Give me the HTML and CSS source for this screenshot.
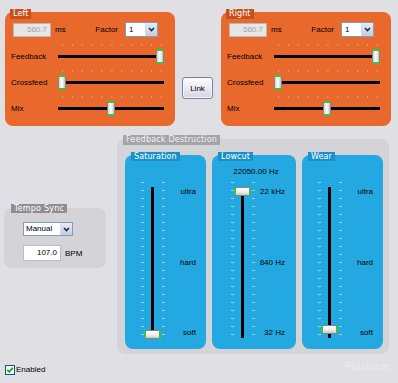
FILE: index.html
```html
<!DOCTYPE html>
<html>
<head>
<meta charset="utf-8">
<title>Delay</title>
<link rel="stylesheet" href="styles.css">
</head>
<body>
<div class="app">
  <div class="top-row">
    <section class="panel">
      <div class="title orange-title">Left</div>
      <div class="delay-row">
        <div class="field disabled">560.7</div>
        <span class="unit">ms</span>
        <span class="factor-label">Factor</span>
        <div class="combo"><span class="combo-text">1</span><span class="combo-btn"><svg width="7" height="5" viewBox="0 0 7 5"><path d="M1 1 L3.5 3.5 L6 1" fill="none" stroke="#1d2a44" stroke-width="1.6"/></svg></span></div>
      </div>
      <div class="hrow"><span class="hlabel">Feedback</span><div class="hslider"><div class="hticks"></div><div class="htrack"></div><div class="hhandle" style="--v:1"></div></div></div>
      <div class="hrow"><span class="hlabel">Crossfeed</span><div class="hslider"><div class="hticks"></div><div class="htrack"></div><div class="hhandle" style="--v:0"></div></div></div>
      <div class="hrow"><span class="hlabel">Mix</span><div class="hslider"><div class="hticks"></div><div class="htrack"></div><div class="hhandle" style="--v:0.5"></div></div></div>
    </section>
    <button class="link-btn">Link</button>
    <section class="panel">
      <div class="title orange-title">Right</div>
      <div class="delay-row">
        <div class="field disabled">560.7</div>
        <span class="unit">ms</span>
        <span class="factor-label">Factor</span>
        <div class="combo"><span class="combo-text">1</span><span class="combo-btn"><svg width="7" height="5" viewBox="0 0 7 5"><path d="M1 1 L3.5 3.5 L6 1" fill="none" stroke="#1d2a44" stroke-width="1.6"/></svg></span></div>
      </div>
      <div class="hrow"><span class="hlabel">Feedback</span><div class="hslider"><div class="hticks"></div><div class="htrack"></div><div class="hhandle" style="--v:1"></div></div></div>
      <div class="hrow"><span class="hlabel">Crossfeed</span><div class="hslider"><div class="hticks"></div><div class="htrack"></div><div class="hhandle" style="--v:0"></div></div></div>
      <div class="hrow"><span class="hlabel">Mix</span><div class="hslider"><div class="hticks"></div><div class="htrack"></div><div class="hhandle" style="--v:0.5"></div></div></div>
    </section>
  </div>

  <div class="mid-row">
    <section class="group tempo">
      <div class="title tempo-title">Tempo Sync</div>
      <div class="combo wide"><span class="combo-text">Manual</span><span class="combo-btn"><svg width="7" height="5" viewBox="0 0 7 5"><path d="M1 1 L3.5 3.5 L6 1" fill="none" stroke="#1d2a44" stroke-width="1.6"/></svg></span></div>
      <div class="bpm-row"><div class="field bpm">107.0</div><span class="unit">BPM</span></div>
    </section>

    <section class="group fd">
      <div class="title fd-title">Feedback Destruction</div>
      <div class="fd-cols">
        <div class="blue">
          <div class="title blue-title">Saturation</div>
          <div class="vhead"></div>
          <div class="vbody">
            <div class="vslider"><div class="vticks left"></div><div class="vticks right"></div><div class="vtrack"></div><div class="vhandle" style="--v:0"></div></div>
            <div class="vlabels"><span>ultra</span><span>hard</span><span>soft</span></div>
          </div>
        </div>
        <div class="blue lowcut">
          <div class="title blue-title">Lowcut</div>
          <div class="vhead"><span class="vvalue">22050.00 Hz</span></div>
          <div class="vbody">
            <div class="vslider"><div class="vticks left"></div><div class="vticks right"></div><div class="vtrack"></div><div class="vhandle" style="--v:1"></div></div>
            <div class="vlabels"><span>22 kHz</span><span>840 Hz</span><span>32 Hz</span></div>
          </div>
        </div>
        <div class="blue">
          <div class="title blue-title">Wear</div>
          <div class="vhead"></div>
          <div class="vbody">
            <div class="vslider"><div class="vticks left"></div><div class="vticks right"></div><div class="vtrack"></div><div class="vhandle" style="--v:0.035"></div></div>
            <div class="vlabels"><span>ultra</span><span>hard</span><span>soft</span></div>
          </div>
        </div>
      </div>
    </section>
  </div>

  <label class="enabled"><span class="checkbox"><svg width="8" height="8" viewBox="0 0 8 8"><path d="M1.2 3.8 L3.2 5.8 L6.8 1.8" fill="none" stroke="#22a222" stroke-width="1.8"/></svg></span>Enabled</label>

  <div class="watermark">Plastique</div>
</div>
</body>
</html>
```

FILE: styles.css
```css
* { box-sizing: border-box; }
html, body { margin: 0; padding: 0; }
body {
  width: 398px;
  height: 383px;
  overflow: hidden;
  background: #e0dfe3;
  font-family: "Liberation Sans", Arial, sans-serif;
  font-size: 8px;
  color: #000;
}
.app {
  position: relative;
  width: 398px;
  height: 383px;
  padding-top: 12px;
}

/* titles */
.title {
  position: absolute;
  left: 5px;
  top: -3px;
  height: 10px;
  line-height: 10px;
  padding: 0 3px;
  font-family: "DejaVu Sans", sans-serif;
  font-size: 8px;
  letter-spacing: 0.1px;
  color: #fff;
  white-space: nowrap;
}
.orange-title { background: #c6511e; }
.fd-title { left: 6px; top: -4px; background: #a5a5a8; color: #f2f2f2; letter-spacing: 0.2px; }
.tempo-title { left: 7px; top: -4px; height: 9px; line-height: 9px; background: #8f8f92; letter-spacing: 0.2px; }
.blue-title { left: 6px; top: -3px; height: 9px; line-height: 9px; background: #1a90c9; }

/* top row */
.top-row {
  display: flex;
  align-items: flex-start;
  padding-left: 5px;
}
.panel {
  position: relative;
  width: 170px;
  height: 114px;
  border-radius: 8px;
  background: #e9692d;
  padding: 10px 11px 0 6px;
}
.delay-row {
  display: flex;
  align-items: center;
  height: 15px;
  margin-right: 6px;
}
.field {
  width: 38px;
  height: 14px;
  border: 1px solid #b8b8bb;
  text-align: right;
  padding-right: 3px;
  line-height: 12px;
}
.field.disabled {
  margin-left: 2px;
  background: #e6e6e6;
  color: #a2a2a2;
}
.unit { margin-left: 4px; }
.factor-label { margin-left: auto; margin-right: 7px; }
.combo {
  display: flex;
  width: 33px;
  height: 15px;
  border: 1px solid #7f9db9;
  background: #fff;
}
.combo-text {
  flex: 1;
  padding-left: 3px;
  line-height: 13px;
}
.combo-btn {
  width: 12px;
  display: flex;
  align-items: center;
  justify-content: center;
  background: linear-gradient(#e6ebf5, #c3cde0);
  border-left: 1px solid #d5dbe8;
}

.hrow {
  display: flex;
  height: 24px;
  margin-top: 2px;
}
.delay-row + .hrow { margin-top: 7px; }
.hlabel {
  width: 47px;
  line-height: 24px;
  padding-top: 1px;
  white-space: nowrap;
}
.hslider {
  position: relative;
  flex: 1;
}
.hticks {
  position: absolute;
  left: 4px;
  top: 0;
  width: 100px;
  height: 2px;
  background: linear-gradient(to right, rgba(210, 170, 150, 0.9) 1px, transparent 1px) 0 0 / 9.9px 2px repeat-x;
}
.htrack {
  position: absolute;
  left: 0;
  right: 0;
  top: 11px;
  height: 3px;
  background: #000;
}
.hhandle {
  position: absolute;
  top: 5px;
  left: calc(var(--v) * (100% - 8px));
  width: 8px;
  height: 15px;
  border: 1px solid #7d8a80;
  border-top: 2px solid #3fc03f;
  border-bottom: 2px solid #3fc03f;
  border-radius: 1px;
  background: linear-gradient(to right, #cfcfcf, #ffffff 45%, #e8e8e8 70%, #bdbdbd);
}

.link-btn {
  margin: 65px 8px 0 7px;
  width: 31px;
  height: 22px;
  padding: 0;
  border: 1px solid #7587a0;
  border-radius: 3px;
  background: linear-gradient(#ffffff, #e6e6ee 60%, #d4d4de);
  box-shadow: inset 0 0 0 1px #f6f6fa;
  font-family: "Liberation Sans", Arial, sans-serif;
  font-size: 8px;
  color: #000;
}

/* middle */
.mid-row {
  display: flex;
  align-items: flex-start;
  margin-top: 13px;
  padding-left: 4px;
}
.group {
  position: relative;
  background: #d4d3d7;
  border-radius: 8px;
}
.tempo {
  width: 102px;
  height: 60px;
  margin-top: 69px;
  margin-right: 11px;
  padding: 14px 0 0 19px;
}
.combo.wide {
  width: 50px;
  height: 14px;
}
.combo.wide .combo-text { line-height: 12px; padding-left: 2px; }
.bpm-row {
  display: flex;
  align-items: center;
  margin-top: 9px;
}
.field.bpm {
  height: 16px;
  line-height: 14px;
  background: #fff;
  color: #000;
  border-color: #b7bccb;
}
.fd {
  width: 272px;
  height: 215px;
  padding: 16px 6px 0 8px;
}
.fd-cols {
  display: grid;
  grid-template-columns: 81px 84px 81px;
  column-gap: 6px;
}
.blue {
  position: relative;
  height: 194px;
  border-radius: 8px;
  background: #23a8e1;
  padding: 0 10px 0 16px;
}
.blue.lowcut { padding-left: 19px; padding-right: 11px; }
.vhead {
  height: 32px;
  padding-top: 12px;
  line-height: 10px;
  text-align: center;
}
.vvalue {
  display: block;
  margin-left: -19px;
  margin-right: -11px;
  padding-left: 4px;
}
.vbody {
  display: flex;
  height: 152px;
}
.vslider {
  position: relative;
  width: 24px;
  height: 100%;
}
.vticks {
  position: absolute;
  top: -5px;
  bottom: 3px;
  width: 3px;
  background: linear-gradient(to bottom, rgba(170, 215, 240, 0.9) 1px, transparent 1px) 0 0 / 3px 8px repeat-y;
}
.vticks.left { left: 0; }
.vticks.right { right: 0; }
.vtrack {
  position: absolute;
  left: 10px;
  top: 0;
  bottom: 1px;
  width: 3px;
  background: #000;
}
.vhandle {
  position: absolute;
  left: 3px;
  top: calc((1 - var(--v)) * (100% - 9px));
  width: 17px;
  height: 9px;
  border: 1px solid #7d8a80;
  border-left: 2px solid #3fc03f;
  border-right: 2px solid #3fc03f;
  border-radius: 1px;
  background: linear-gradient(#ffffff, #f2f2f2 50%, #c9c9c9);
}
.vlabels {
  flex: 1;
  display: flex;
  flex-direction: column;
  justify-content: space-between;
  align-items: flex-end;
  padding-bottom: 1px;
  line-height: 10px;
}

/* bottom */
.enabled {
  display: flex;
  align-items: center;
  margin: 10px 0 0 5px;
  height: 11px;
  line-height: 11px;
}
.checkbox {
  width: 10px;
  height: 10px;
  margin-right: 1px;
  border: 1px solid #1c5180;
  background: #f4f4f4;
  display: flex;
  align-items: center;
  justify-content: center;
}
.watermark {
  position: absolute;
  right: 8px;
  bottom: 11px;
  font-size: 11px;
  line-height: 12px;
  color: rgba(255, 255, 255, 0.4);
}
```
